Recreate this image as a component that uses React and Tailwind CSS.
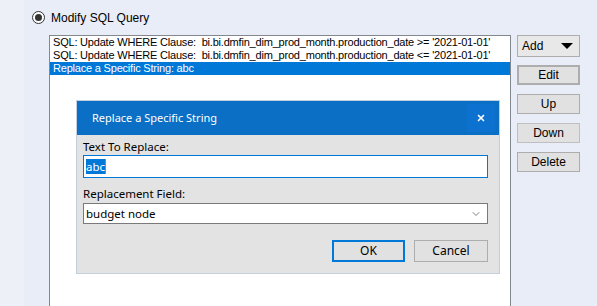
import { ChevronDown, X } from 'lucide-react';

const listFont = { fontFamily: '"Liberation Sans", Arial, sans-serif' };
const dlgFont = { fontFamily: '"Noto Sans", "Open Sans", sans-serif' };

const rows = [
  "SQL: Update WHERE Clause:  bi.bi.dmfin_dim_prod_month.production_date >= '2021-01-01'",
  "SQL: Update WHERE Clause:  bi.bi.dmfin_dim_prod_month.production_date <= '2021-01-01'",
  'Replace a Specific String: abc',
];

const sideBtn = 'h-[20px] w-[63px] border border-[#adadad] bg-[#e1e1e1] text-[12px] leading-none text-black flex items-center justify-center';

function App() {
  return (
    <div className="relative flex h-[306px] w-[597px] overflow-hidden bg-[#e9edf8]" style={listFont}>
      <div className="w-[24px] shrink-0 bg-[#eef0f8]" />
      <div className="flex flex-col">
        {/* radio option */}
        <div className="mt-[11px] flex h-[13px] items-center gap-[6px] pl-[8px]">
          <span className="flex h-[13px] w-[13px] items-center justify-center rounded-full border border-[#333] bg-white">
            <span className="h-[7px] w-[7px] rounded-full bg-[#333]" />
          </span>
          <span className="text-[12px] text-black">Modify SQL Query</span>
        </div>

        <div className="mt-[11px] flex gap-[6px] pl-[25px]">
          {/* list of steps */}
          <div className="h-[290px] w-[462px] shrink-0 border border-[#828790] bg-white">
            {rows.map((r, i) => (
              <div
                key={r}
                className={`h-[13px] overflow-hidden whitespace-pre pl-[3px] text-[11px] leading-[13px] tracking-[-0.2px] ${i === 2 ? 'bg-[#0078d7] text-white' : 'text-black'}`}
              >
                {r}
              </div>
            ))}
          </div>

          <div className="flex flex-col">
            <div className="flex h-[22px] w-[63px] items-center justify-between border border-[#adadad] bg-[#e8e8e8] pl-[4px] pr-[6px] text-[12px] text-black">
              <span>Add</span>
              <span className="h-0 w-0 border-x-[6px] border-t-[6px] border-x-transparent border-t-black" />
            </div>
            <div className={`${sideBtn} mt-[8px] border-2 border-[#0078d7]`}>Edit</div>
            <div className={`${sideBtn} mt-[9px]`}>Up</div>
            <div className={`${sideBtn} mt-[9px] border-[#bfbfbf] bg-[#cccccc] text-[#3f4a6b]`}>Down</div>
            <div className={`${sideBtn} mt-[9px]`}>Delete</div>
          </div>
        </div>
      </div>

      {/* modal dialog over the list */}
      <div className="absolute left-[76px] top-[100px] flex h-[174px] w-[424px] flex-col border border-[#c3cfdd] bg-[#e3e3e3]" style={dlgFont}>
        <div className="flex h-[34px] items-center justify-between bg-[#0b6fc5] pl-[15px]">
          <span className="text-[11px] text-white">Replace a Specific String</span>
          <span className="mr-[4px] flex h-[28px] w-[28px] items-center justify-center bg-[#0d72cf]">
            <X className="h-[10px] w-[10px] text-white" strokeWidth={4} />
          </span>
        </div>
        <div className="flex flex-col pl-[6px] pr-[11px] pt-[4px]">
          <span className="text-[11.5px] leading-[16px] text-black">Text To Replace:</span>
          <div className="flex h-[23px] items-center border border-[#0078d7] bg-white pl-[2px]">
            <span className="bg-[#0078d7] text-[11.5px] leading-[15px] text-white">abc</span>
            <span className="h-[15px] w-[1px] bg-[#e07b00]" />
          </div>
          <span className="mt-[8px] text-[11.5px] leading-[16px] text-black">Replacement Field:</span>
          <div className="mt-[1px] flex h-[21px] items-center justify-between border border-[#7a7a7a] bg-white pl-[2px] pr-[5px]">
            <span className="text-[11.5px] text-black">budget node</span>
            <ChevronDown className="h-[12px] w-[12px] text-[#555]" strokeWidth={1.5} />
          </div>
          <div className="mt-[16px] flex justify-end gap-[9px]">
            <div className="flex h-[22px] w-[73px] items-center justify-center border-2 border-[#0078d7] bg-[#e1e1e1] text-[12px] text-black">OK</div>
            <div className="flex h-[22px] w-[74px] items-center justify-center border border-[#adadad] bg-[#e1e1e1] text-[12px] text-black">Cancel</div>
          </div>
        </div>
      </div>
    </div>
  );
}

export default App;
